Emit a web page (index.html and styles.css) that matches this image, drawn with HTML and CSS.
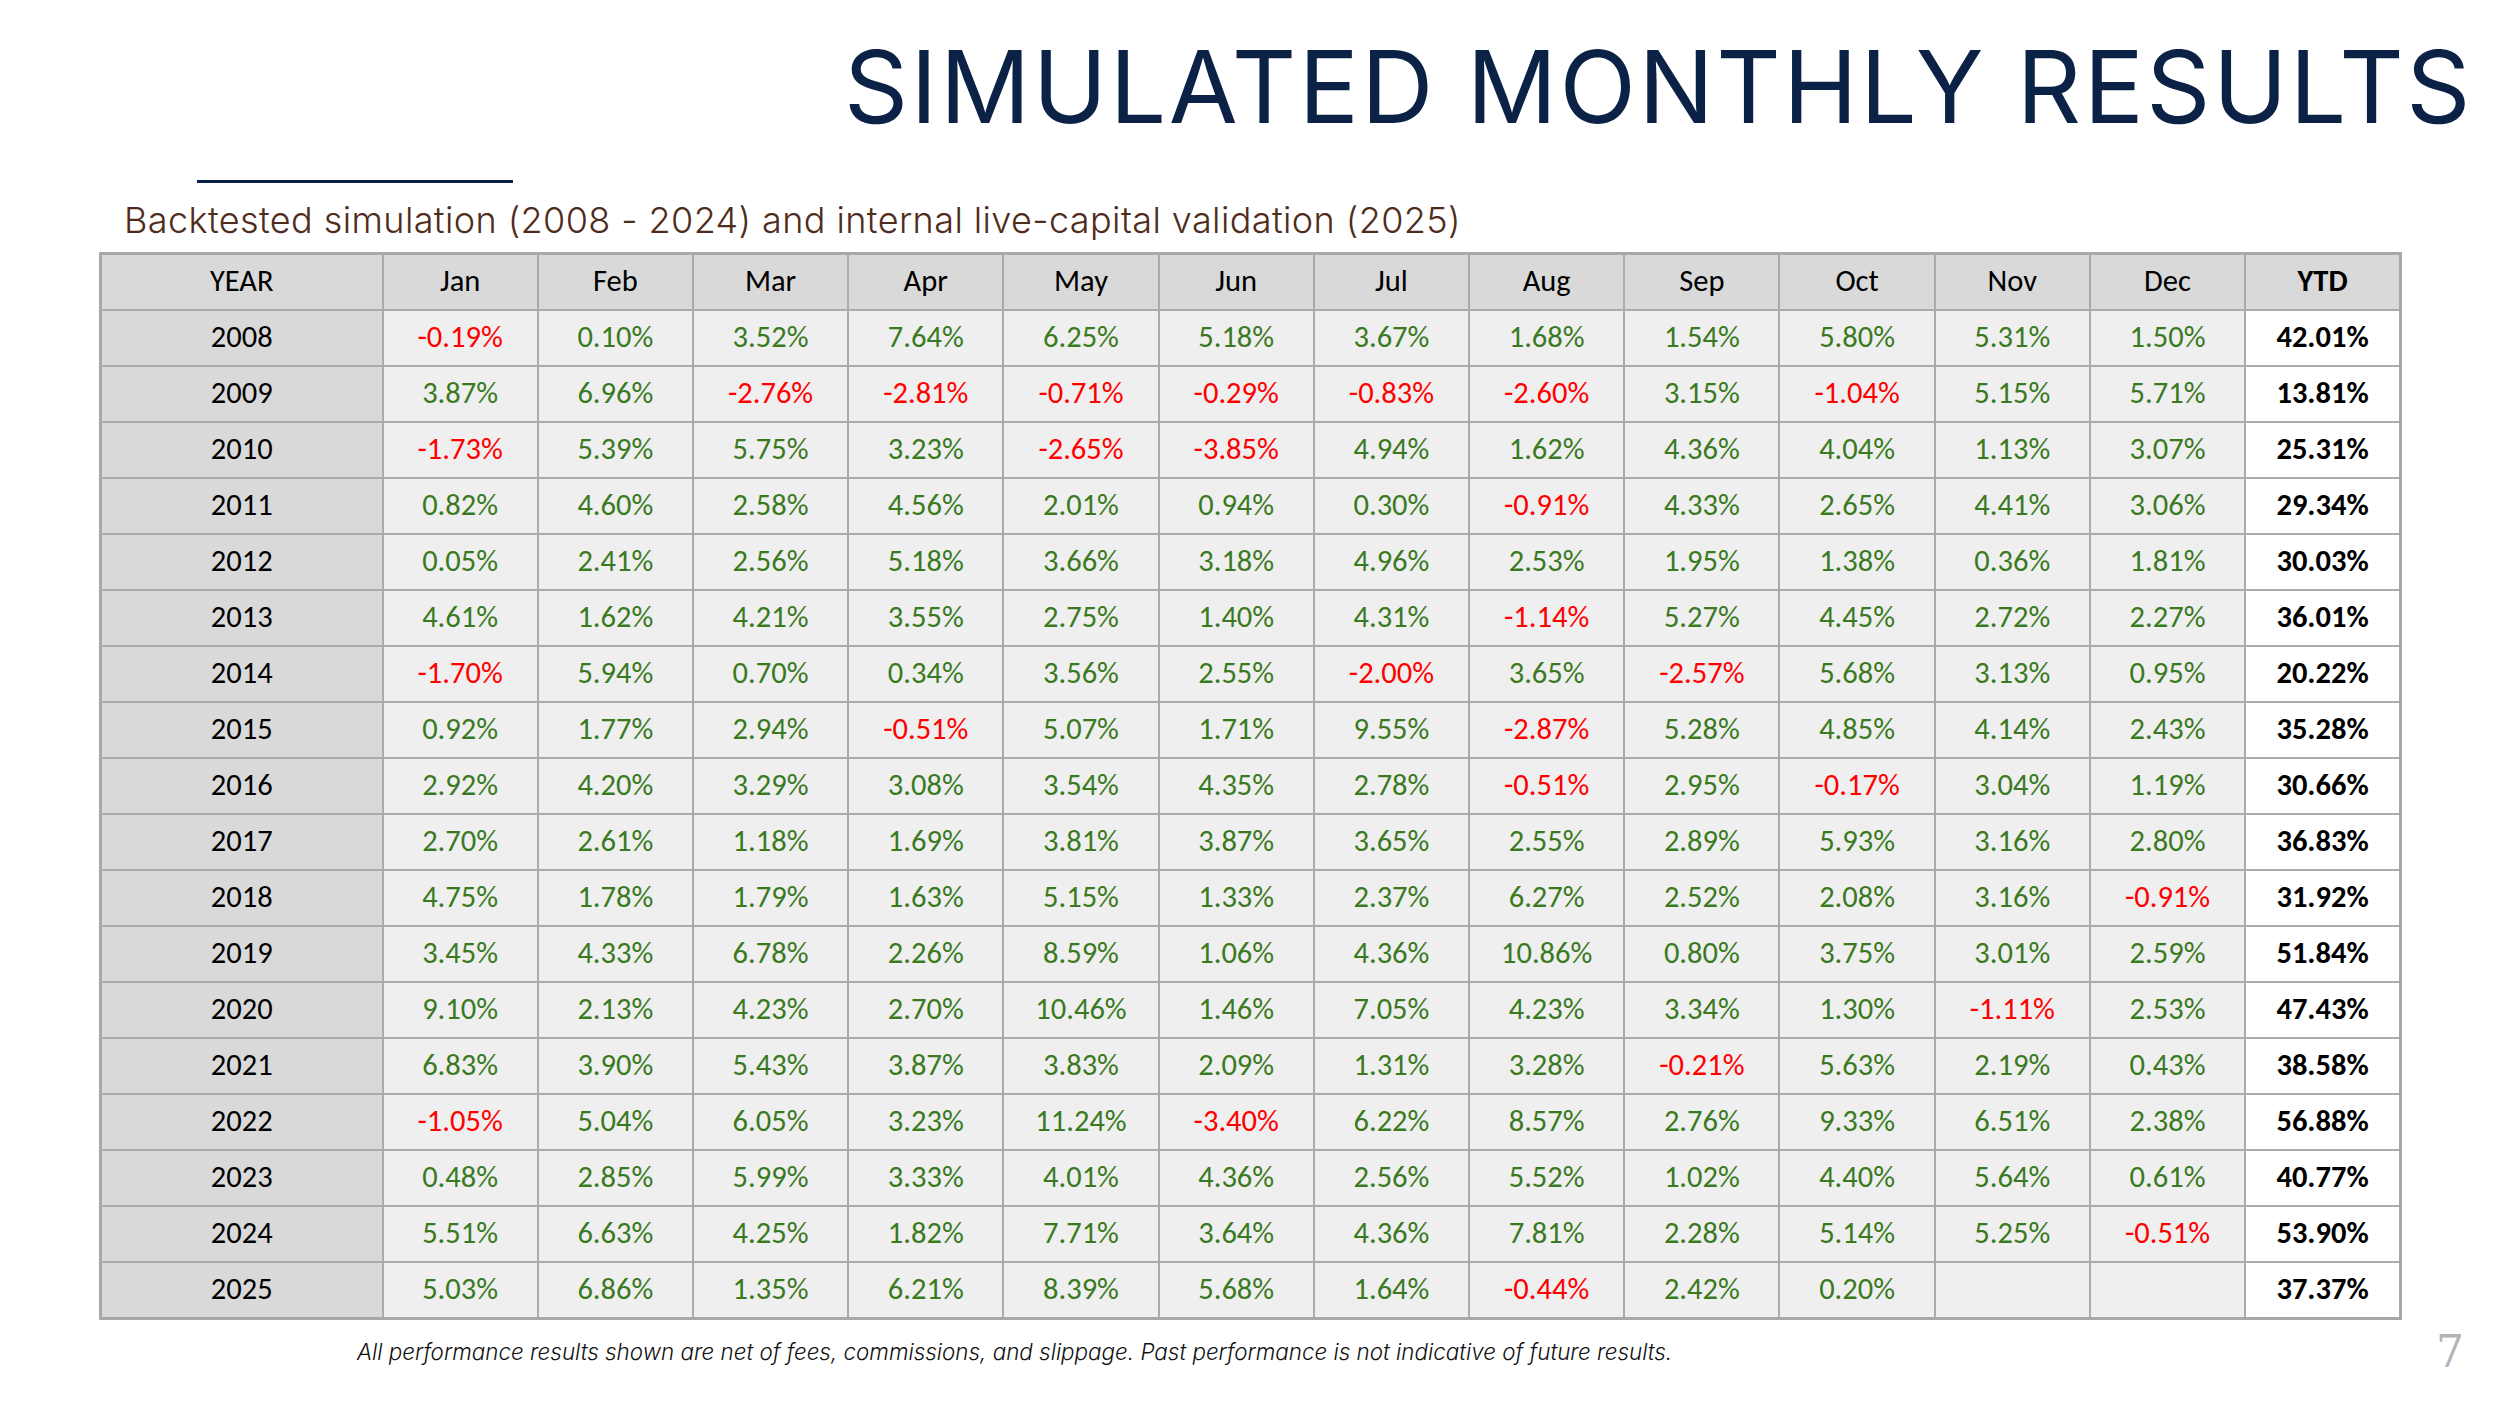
FILE: index.html
```html
<!DOCTYPE html>
<html lang="en">
<head>
<meta charset="utf-8">
<title>Simulated Monthly Results</title>
<link rel="stylesheet" href="styles.css">
</head>
<body>
<div class="slide">
  <h1 class="title">SIMULATED MONTHLY RESULTS</h1>
  <div class="rule"></div>
  <p class="subtitle">Backtested simulation (2008 - 2024) and internal live-capital validation (2025)</p>
  <table class="results">
    <colgroup>
      <col class="c-yr"><col span="13">
    </colgroup>
    <thead>
      <tr><th>YEAR</th><th>Jan</th><th>Feb</th><th>Mar</th><th>Apr</th><th>May</th><th>Jun</th><th>Jul</th><th>Aug</th><th>Sep</th><th>Oct</th><th>Nov</th><th>Dec</th><th class="ytdh">YTD</th></tr>
    </thead>
    <tbody id="rows"></tbody>
  </table>
  <div class="footer">
    <p class="note">All performance results shown are net of fees, commissions, and slippage. Past performance is not indicative of future results.</p>
    <span class="page">7</span>
  </div>
</div>
<script src="app.js"></script>
</body>
</html>
```

FILE: app.js
```js
const data = [
  ["2008","-0.19","0.10","3.52","7.64","6.25","5.18","3.67","1.68","1.54","5.80","5.31","1.50","42.01"],
  ["2009","3.87","6.96","-2.76","-2.81","-0.71","-0.29","-0.83","-2.60","3.15","-1.04","5.15","5.71","13.81"],
  ["2010","-1.73","5.39","5.75","3.23","-2.65","-3.85","4.94","1.62","4.36","4.04","1.13","3.07","25.31"],
  ["2011","0.82","4.60","2.58","4.56","2.01","0.94","0.30","-0.91","4.33","2.65","4.41","3.06","29.34"],
  ["2012","0.05","2.41","2.56","5.18","3.66","3.18","4.96","2.53","1.95","1.38","0.36","1.81","30.03"],
  ["2013","4.61","1.62","4.21","3.55","2.75","1.40","4.31","-1.14","5.27","4.45","2.72","2.27","36.01"],
  ["2014","-1.70","5.94","0.70","0.34","3.56","2.55","-2.00","3.65","-2.57","5.68","3.13","0.95","20.22"],
  ["2015","0.92","1.77","2.94","-0.51","5.07","1.71","9.55","-2.87","5.28","4.85","4.14","2.43","35.28"],
  ["2016","2.92","4.20","3.29","3.08","3.54","4.35","2.78","-0.51","2.95","-0.17","3.04","1.19","30.66"],
  ["2017","2.70","2.61","1.18","1.69","3.81","3.87","3.65","2.55","2.89","5.93","3.16","2.80","36.83"],
  ["2018","4.75","1.78","1.79","1.63","5.15","1.33","2.37","6.27","2.52","2.08","3.16","-0.91","31.92"],
  ["2019","3.45","4.33","6.78","2.26","8.59","1.06","4.36","10.86","0.80","3.75","3.01","2.59","51.84"],
  ["2020","9.10","2.13","4.23","2.70","10.46","1.46","7.05","4.23","3.34","1.30","-1.11","2.53","47.43"],
  ["2021","6.83","3.90","5.43","3.87","3.83","2.09","1.31","3.28","-0.21","5.63","2.19","0.43","38.58"],
  ["2022","-1.05","5.04","6.05","3.23","11.24","-3.40","6.22","8.57","2.76","9.33","6.51","2.38","56.88"],
  ["2023","0.48","2.85","5.99","3.33","4.01","4.36","2.56","5.52","1.02","4.40","5.64","0.61","40.77"],
  ["2024","5.51","6.63","4.25","1.82","7.71","3.64","4.36","7.81","2.28","5.14","5.25","-0.51","53.90"],
  ["2025","5.03","6.86","1.35","6.21","8.39","5.68","1.64","-0.44","2.42","0.20","","","37.37"]
];
const body = document.getElementById("rows");
data.forEach(r => {
  const tr = document.createElement("tr");
  r.forEach((v, i) => {
    const td = document.createElement("td");
    if (i === 0) { td.className = "yr"; td.textContent = v; }
    else if (i === 13) { td.className = "ytd"; td.textContent = v + "%"; }
    else if (v === "") { td.className = "m"; }
    else { td.className = "m " + (v.startsWith("-") ? "neg" : "pos"); td.textContent = v + "%"; }
    tr.appendChild(td);
  });
  body.appendChild(tr);
});
```

FILE: styles.css
```css
html, body {
  margin: 0;
  padding: 0;
  background: #ffffff;
}
.slide {
  width: 2500px;
  height: 1406px;
  position: relative;
  overflow: hidden;
  font-family: "Open Sans", "Noto Sans", sans-serif;
}
.title {
  margin: 0;
  padding: 28px 27px 0 0;
  text-align: right;
  font-family: "Inter", "Noto Sans", sans-serif;
  font-weight: 400;
  font-size: 100px;
  line-height: 118px;
  color: #0c2146;
  letter-spacing: 2.5px;
}
.rule {
  margin: 34px 0 0 197px;
  width: 316px;
  height: 3px;
  background: #0c2146;
}
.subtitle {
  margin: 12px 0 0 124px;
  font-family: "Inter", "Noto Sans", sans-serif;
  font-weight: 300;
  font-size: 36px;
  line-height: 50px;
  letter-spacing: 0.4px;
  color: #4f2c1c;
}
.results {
  margin: 7px 0 0 99px;
  width: 2303px;
  border-collapse: collapse;
  table-layout: fixed;
  font-family: Calibri, Carlito, "Lato", "Open Sans", sans-serif;
  font-size: 30.5px;
  border: 3px solid #a8a8a8;
}
.c-yr {
  width: 282px;
}
.results th, .results td {
  border: 2px solid #ababab;
  height: 50px;
  padding: 0 0 4px 0;
  text-align: center;
  font-weight: 400;
  color: #000;
}
.results thead th {
  background: #d9d9d9;
}
.results th.ytdh {
  font-weight: 700;
}
.results td.yr {
  background: #d9d9d9;
}
.results td.m {
  background: #efefef;
}
.results td.ytd {
  background: #ffffff;
  font-weight: 700;
}
.pos { color: #3a7a1f !important; }
.neg { color: #ff0000 !important; }
.footer {
  display: flex;
  align-items: center;
  margin-top: 6px;
}
.note {
  margin: 0 0 0 357px;
  font-family: "Inter", "Noto Sans", sans-serif;
  font-style: italic;
  font-weight: 300;
  font-size: 22.4px;
  color: #111;
  flex: 1;
}
.page {
  margin-right: 36px;
  font-family: "DejaVu Serif", serif;
  font-weight: 300;
  font-size: 44px;
  color: #b3b3b3;
}
```
